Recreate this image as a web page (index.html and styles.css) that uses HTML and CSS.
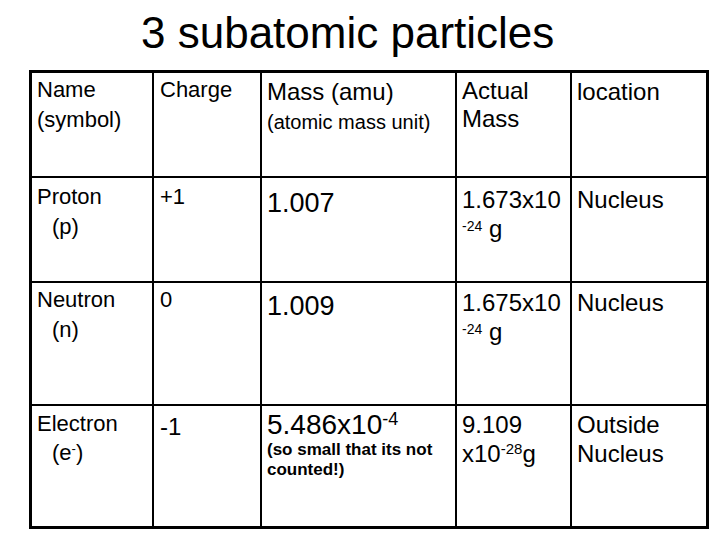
FILE: index.html
```html
<!DOCTYPE html>
<html>
<head>
<meta charset="utf-8">
<link rel="stylesheet" href="styles.css">
</head>
<body>
<h1 class="title">3 subatomic particles</h1>
<div class="grid">
  <div class="cell pt2"><div class="f22">Name</div><div class="f22">(symbol)</div></div>
  <div class="cell pt2"><div class="f22 cx">Charge</div></div>
  <div class="cell pt4"><div class="f24">Mass (amu)</div><div class="f20">(atomic mass unit)</div></div>
  <div class="cell pt4"><div class="f24 lh28">Actual</div><div class="f24 lh28">Mass</div></div>
  <div class="cell pt4"><div class="f24">location</div></div>

  <div class="cell pt4"><div class="f22">Proton</div><div class="f22 ind">(p)</div></div>
  <div class="cell pt4"><div class="f22 cx">+1</div></div>
  <div class="cell pt10"><div class="f27">1.007</div></div>
  <div class="cell pt7"><div class="f24 lh29">1.673x10</div><div class="f24 lh29"><span class="sup14">-24</span> g</div></div>
  <div class="cell pt7"><div class="f24">Nucleus</div></div>

  <div class="cell pt2"><div class="f22">Neutron</div><div class="f22 ind">(n)</div></div>
  <div class="cell pt2"><div class="f22 cx">0</div></div>
  <div class="cell pt8"><div class="f27">1.009</div></div>
  <div class="cell pt5"><div class="f24 lh29">1.675x10</div><div class="f24 lh29"><span class="sup14">-24</span> g</div></div>
  <div class="cell pt5"><div class="f24">Nucleus</div></div>

  <div class="cell pt3"><div class="f22 lh29">Electron</div><div class="f22 lh29 ind">(e<span class="sup12">-</span>)</div></div>
  <div class="cell pt6"><div class="f24 cx">-1</div></div>
  <div class="cell pt4"><div class="f28">5.486x10<span class="sup18">-4</span></div><div class="f17b">(so small that its not counted!)</div></div>
  <div class="cell pt4"><div class="f24 lh29">9.109</div><div class="f24 lh29">x10<span class="sup14b">-28</span>g</div></div>
  <div class="cell pt4"><div class="f24 lh29">Outside</div><div class="f24 lh29">Nucleus</div></div>
</div>
</body>
</html>
```

FILE: styles.css
```css
body {
  margin: 0;
  background: #fff;
  color: #000;
  font-family: "Liberation Sans", Arial, sans-serif;
}

.title {
  margin: 0;
  padding: 11px 0 0 141px;
  height: 59px;
  font-size: 44px;
  font-weight: normal;
  line-height: 44px;
}

.grid {
  display: grid;
  grid-template-columns: 120px 106px 193px 113px 134px;
  grid-template-rows: 103px 103px 121px 120px;
  gap: 2px;
  padding: 3px;
  background: #000;
  margin-left: 29px;
  width: max-content;
}

.cell {
  background: #fff;
  padding-left: 5px;
  padding-right: 2px;
}

.cx { margin-left: 1px; }

.pt2 { padding-top: 2px; }
.pt3 { padding-top: 3px; }
.pt4 { padding-top: 4px; }
.pt5 { padding-top: 5px; }
.pt6 { padding-top: 6px; }
.pt7 { padding-top: 7px; }
.pt8 { padding-top: 8px; }
.pt10 { padding-top: 10px; }

.f20 { font-size: 20px; line-height: 30px; }
.f22 { font-size: 22px; line-height: 30px; }
.f24 { font-size: 24px; line-height: 30px; }
.f27 { font-size: 27px; line-height: 30px; }
.f28 { font-size: 28px; line-height: 30px; white-space: nowrap; }
.f17b { font-size: 17px; font-weight: bold; line-height: 20px; }

.lh28 { line-height: 28px; }
.lh29 { line-height: 29px; }

.ind { padding-left: 15px; }

.sup14 {
  font-size: 14px;
  line-height: 0;
  vertical-align: 6px;
}

.sup14b {
  font-size: 15px;
  line-height: 0;
  vertical-align: 8px;
}

.sup18 {
  font-size: 18px;
  line-height: 0;
  vertical-align: 9px;
}

.sup12 {
  font-size: 13px;
  line-height: 0;
  vertical-align: 7px;
}
```
